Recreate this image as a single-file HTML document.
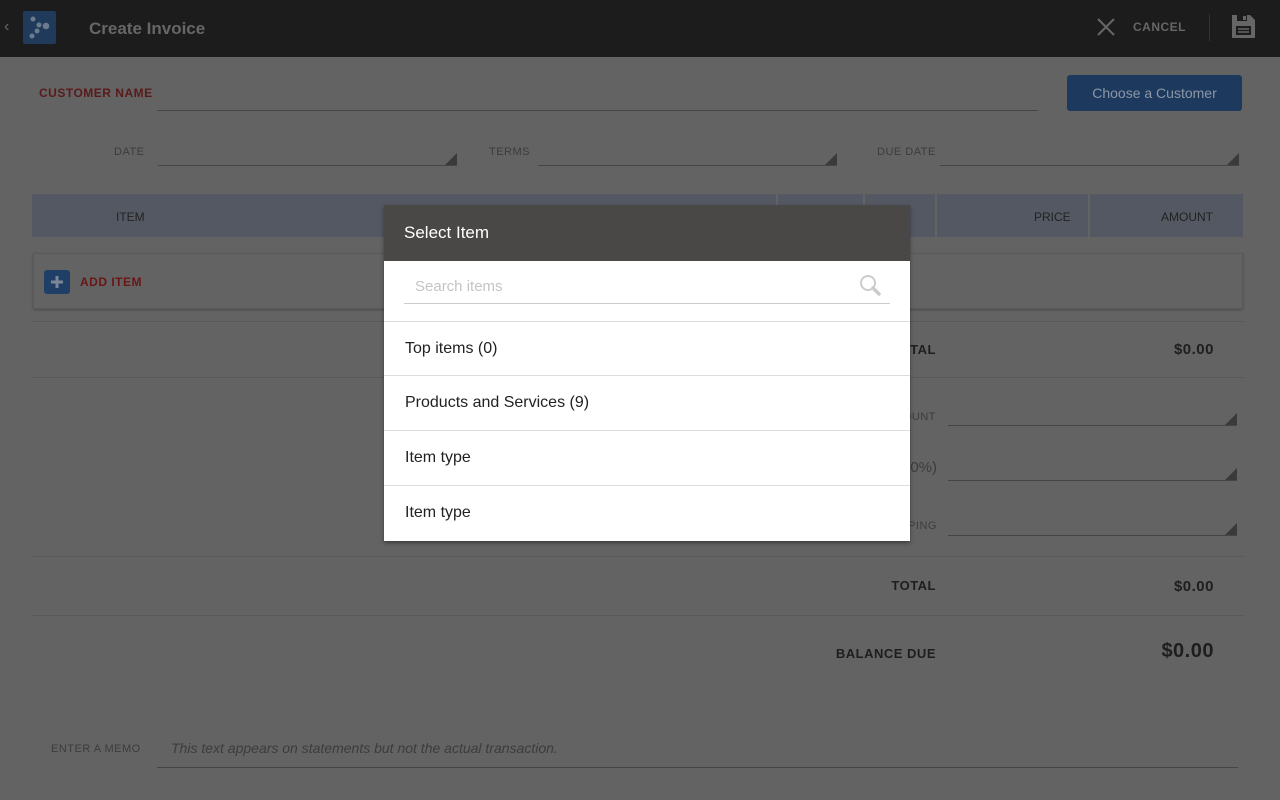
<!DOCTYPE html>
<html><head><meta charset="utf-8"><style>
*{margin:0;padding:0;box-sizing:border-box}
body{width:1280px;height:800px;background:#636363;font-family:"Liberation Sans","DejaVu Sans",sans-serif;position:relative;overflow:hidden;color:#2a2a2a}
.a{position:absolute}
.hdr{left:0;top:0;width:1280px;height:57px;background:#1c1c1c}
.lbl{font-size:11px;color:#3c3c3c;letter-spacing:.5px}
.line{height:1px;background:#454545}
.tri{width:0;height:0;border-left:12px solid transparent;border-bottom:12px solid #3a3a3a}
.th{background:#545862;top:194px;height:43px}
.thl{font-size:12px;color:#222}
.b{font-weight:bold;font-size:13px;color:#1e1e1e;letter-spacing:.5px}
.sep{height:1px;background:#595959;left:32px;width:1212px}
.row{left:384px;width:526px;height:55px;border-top:1px solid #ddd;font-size:16px;color:#222;padding-left:21px;line-height:54px}
</style></head><body>
<div class="a hdr"></div>
<div class="a" style="left:4px;top:18px;color:#666;font-size:16px">‹</div>
<div class="a" style="left:23px;top:11px;width:33px;height:33px;background:#1f3a5a;border-radius:2px">
<svg width="33" height="33"><g fill="#6b7a8c"><circle cx="10" cy="8" r="2.5"/><circle cx="16" cy="14" r="2.5"/><circle cx="23" cy="15" r="3.3"/><circle cx="14" cy="20" r="2.5"/><circle cx="9" cy="25" r="2.5"/></g></svg></div>
<div class="a" style="left:89px;top:19px;font-size:17px;font-weight:bold;color:#666">Create Invoice</div>
<svg class="a" style="left:1096px;top:17px" width="20" height="20"><path d="M2 2L18 18M18 2L2 18" stroke="#666" stroke-width="2"/></svg>
<div class="a" style="left:1133px;top:20px;font-size:12px;font-weight:bold;color:#666;letter-spacing:.5px">CANCEL</div>
<div class="a" style="left:1209px;top:14px;width:1px;height:27px;background:#333"></div>
<svg class="a" style="left:1232px;top:15px" width="23" height="23"><path d="M0 0H18L23 5V23H0Z" fill="#666"/><rect x="5" y="0" width="10" height="6" fill="#1c1c1c"/><rect x="11" y="1" width="3" height="4" fill="#666"/><rect x="4" y="11" width="15" height="9" fill="#1c1c1c"/><path d="M6 14H17M6 17H17" stroke="#666" stroke-width="1.5"/></svg>

<div class="a" style="left:39px;top:86px;font-size:12px;font-weight:bold;color:#5a1a1a;letter-spacing:.5px">CUSTOMER NAME</div>
<div class="a line" style="left:157px;top:110px;width:881px"></div>
<div class="a" style="left:1067px;top:75px;width:175px;height:36px;background:#1d3a5e;border-radius:3px;color:#8a96a6;font-size:14px;text-align:center;line-height:36px">Choose a Customer</div>

<div class="a lbl" style="left:114px;top:146px">DATE</div>
<div class="a line" style="left:158px;top:165px;width:299px"></div><div class="a tri" style="left:445px;top:153px"></div>
<div class="a lbl" style="left:489px;top:146px">TERMS</div>
<div class="a line" style="left:538px;top:165px;width:299px"></div><div class="a tri" style="left:825px;top:153px"></div>
<div class="a lbl" style="left:877px;top:146px">DUE DATE</div>
<div class="a line" style="left:940px;top:165px;width:299px"></div><div class="a tri" style="left:1227px;top:153px"></div>

<div class="a th" style="left:32px;width:744px"></div>
<div class="a th" style="left:778px;width:85px"></div>
<div class="a th" style="left:865px;width:70px"></div>
<div class="a th" style="left:937px;width:151px"></div>
<div class="a th" style="left:1090px;width:153px"></div>
<div class="a thl" style="left:116px;top:210px">ITEM</div>
<div class="a thl" style="left:1034px;top:210px">PRICE</div>
<div class="a thl" style="left:1161px;top:210px">AMOUNT</div>

<div class="a" style="left:33px;top:253px;width:1210px;height:56px;border:1px solid #5a5a5a;box-shadow:0 1px 2px #4a4a4a"></div>
<div class="a" style="left:44px;top:270px;width:26px;height:24px;background:#1f3f66;border-radius:3px"><svg width="26" height="24"><path d="M13 6V18M7 12H19" stroke="#7b8797" stroke-width="3"/></svg></div>
<div class="a" style="left:80px;top:275px;font-size:12px;font-weight:bold;color:#6a1616;letter-spacing:.5px">ADD ITEM</div>

<div class="a sep" style="top:321px"></div>
<div class="a b" style="left:830px;top:342px;width:106px;text-align:right">SUBTOTAL</div>
<div class="a b" style="left:1140px;top:341px;width:74px;text-align:right;font-size:15px">$0.00</div>
<div class="a sep" style="top:377px"></div>
<div class="a lbl" style="left:860px;top:411px;width:76px;text-align:right">DISCOUNT</div>
<div class="a line" style="left:948px;top:425px;width:289px"></div><div class="a tri" style="left:1225px;top:413px"></div>
<div class="a" style="left:860px;top:459px;width:77px;text-align:right;font-size:15px;color:#3c3c3c">(0%)</div>
<div class="a line" style="left:948px;top:480px;width:289px"></div><div class="a tri" style="left:1225px;top:468px"></div>
<div class="a lbl" style="left:860px;top:520px;width:77px;text-align:right">SHIPPING</div>
<div class="a line" style="left:948px;top:535px;width:289px"></div><div class="a tri" style="left:1225px;top:523px"></div>
<div class="a sep" style="top:556px"></div>
<div class="a b" style="left:830px;top:578px;width:106px;text-align:right">TOTAL</div>
<div class="a b" style="left:1140px;top:578px;width:74px;text-align:right;font-size:15px">$0.00</div>
<div class="a sep" style="top:615px"></div>
<div class="a b" style="left:800px;top:646px;width:136px;text-align:right">BALANCE DUE</div>
<div class="a b" style="left:1120px;top:640px;width:94px;text-align:right;font-size:20px">$0.00</div>

<div class="a lbl" style="left:51px;top:743px">ENTER A MEMO</div>
<div class="a" style="left:171px;top:740px;font-size:14px;font-style:italic;color:#3c3c3c">This text appears on statements but not the actual transaction.</div>
<div class="a line" style="left:157px;top:767px;width:1081px"></div>

<div class="a" style="left:384px;top:205px;width:526px;height:336px;background:#fff;box-shadow:0 2px 4px rgba(0,0,0,.4)"></div>
<div class="a" style="left:384px;top:205px;width:526px;height:56px;background:#4a4846;color:#fff;font-size:17px;padding:18px 0 0 20px">Select Item</div>
<div class="a" style="left:415px;top:278px;font-size:15px;color:#c4c4c4">Search items</div>
<svg class="a" style="left:858px;top:273px" width="24" height="24"><circle cx="10" cy="10" r="7" fill="none" stroke="#ccc" stroke-width="2"/><path d="M15 15L21 21" stroke="#ccc" stroke-width="3.5" stroke-linecap="round"/></svg>
<div class="a" style="left:404px;top:303px;width:486px;height:1px;background:#ccc"></div>
<div class="a row" style="top:321px">Top items (0)</div>
<div class="a row" style="top:375px">Products and Services (9)</div>
<div class="a row" style="top:430px">Item type</div>
<div class="a row" style="top:485px">Item type</div>
</body></html>
